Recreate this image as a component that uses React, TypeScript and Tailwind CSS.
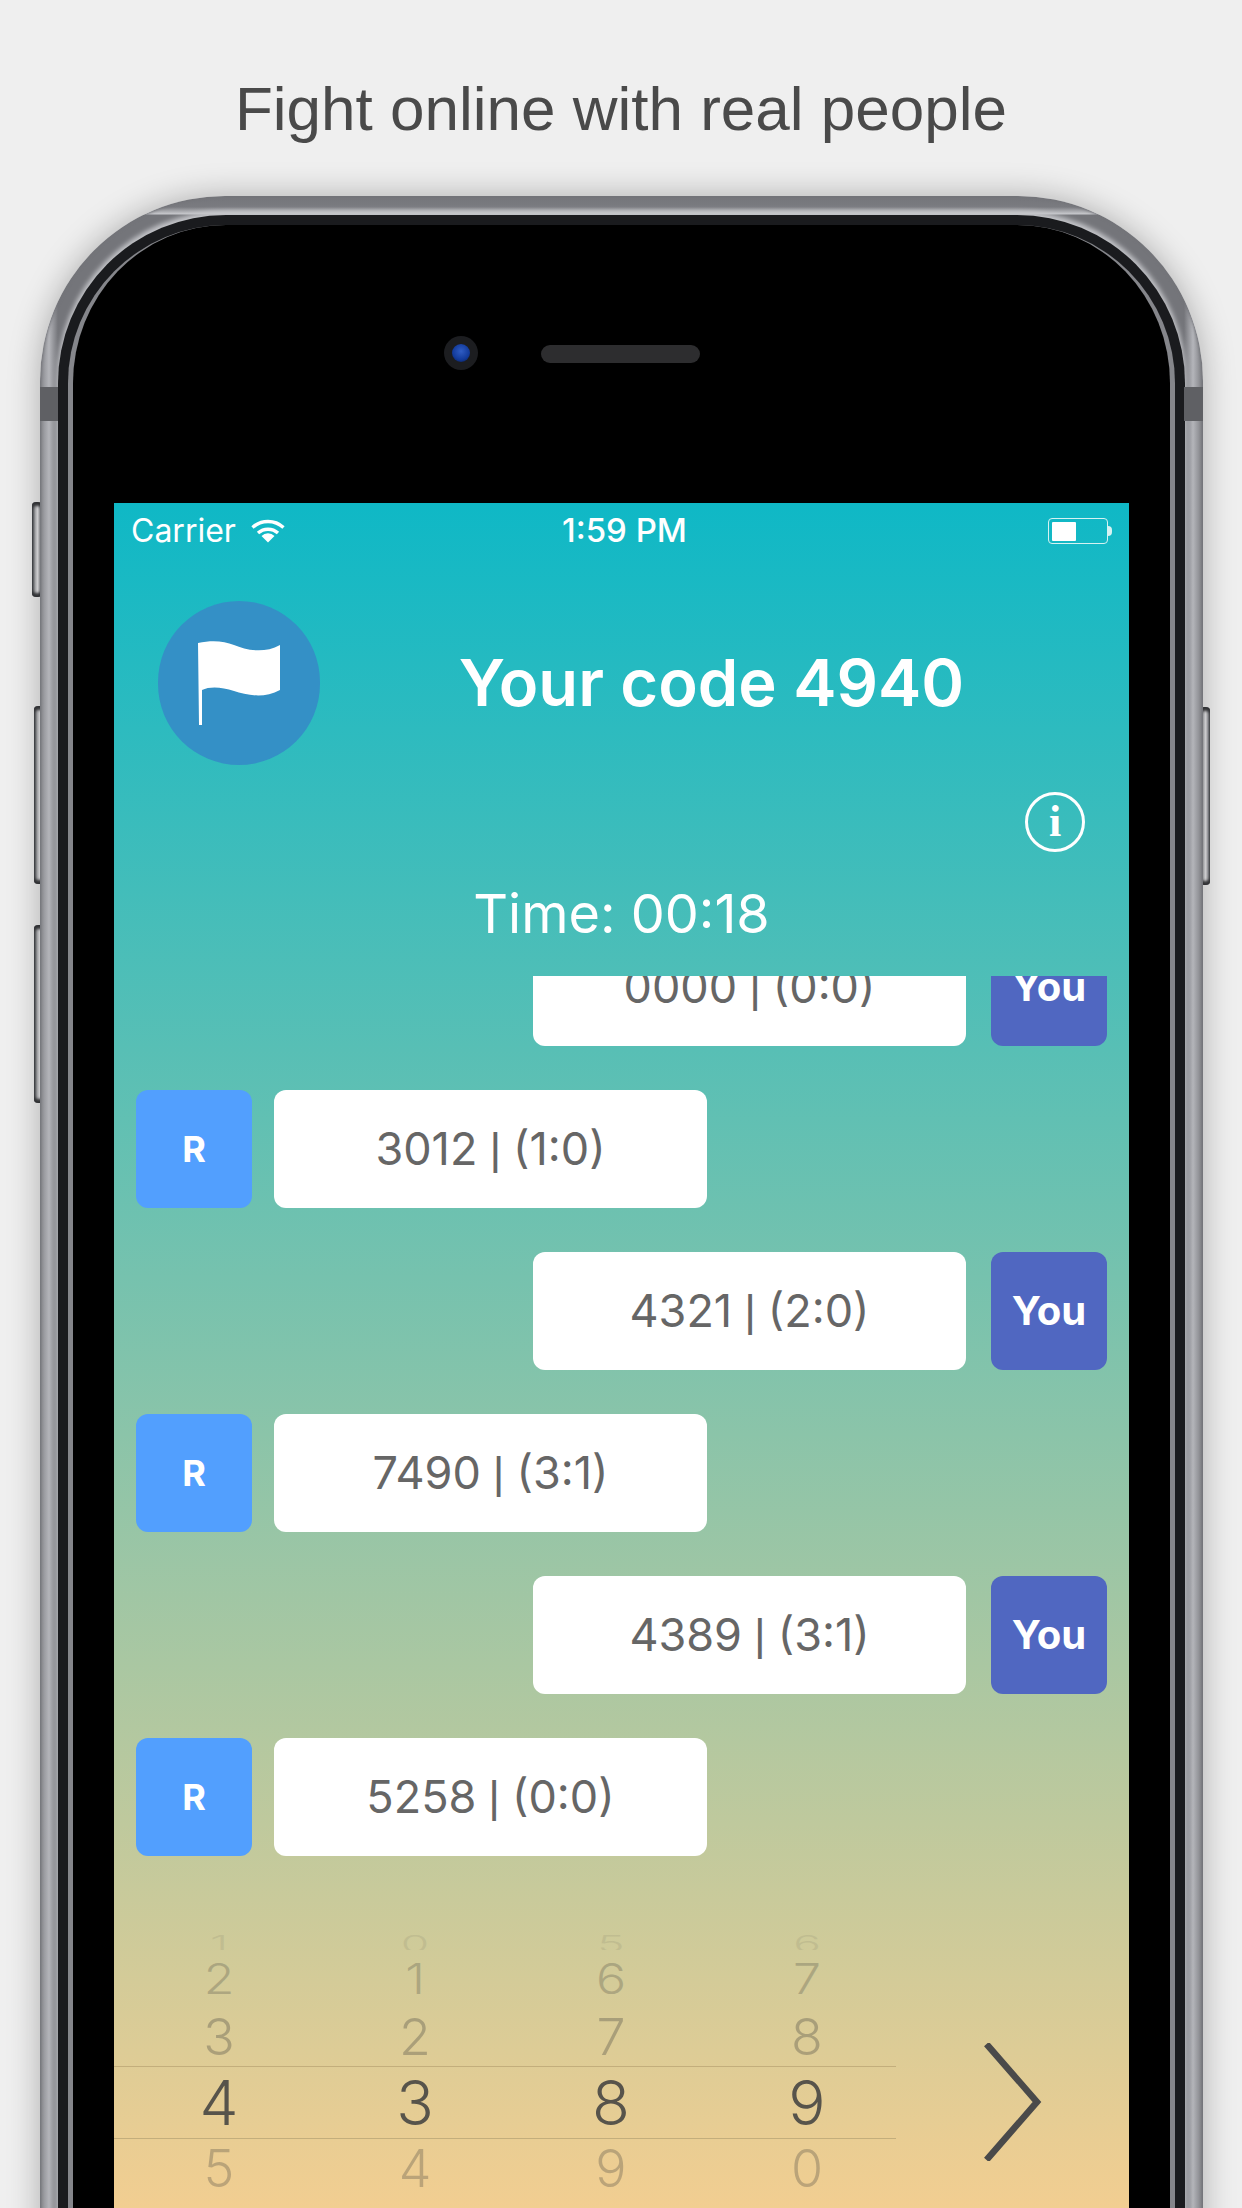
const UI = "font-['Inter','Liberation_Sans',sans-serif]";

function Wifi() {
  return (
    <svg width="34" height="24" viewBox="0 0 34 24" className="ml-[15px] shrink-0" fill="none" stroke="white" strokeWidth="3.4">
      <path d="M1.5 8.5 A23 23 0 0 1 32.5 8.5" />
      <path d="M7 14 A15 15 0 0 1 27 14" />
      <path d="M17 23.5 L10.5 17 A9 9 0 0 1 23.5 17 Z" fill="white" stroke="none" />
    </svg>
  );
}

function Flag() {
  return (
    <svg width="82" height="84" viewBox="0 0 82 84" fill="white">
      <path d="M0 2 C14 -1 26 0 36 4 C48 9 66 13 82 4 L82 49 C66 58 48 54 36 50 C24 46 12 45 4 49 L4 84 L1 84 Z" />
    </svg>
  );
}

function Chevron() {
  return (
    <svg width="60" height="118" viewBox="0 0 60 118" fill="none" stroke="#4a4a4a" strokeWidth="6.5">
      <path d="M3.5 1 L54 59 L3.5 117" />
    </svg>
  );
}

function Score({ text }: { text: string }) {
  const [code, score] = text.split(" | ");
  return (
    <>
      {code}
      <span className="mx-[12px] font-['Liberation_Sans',sans-serif]">|</span>
      {score}
    </>
  );
}

function Row({ side, text }: { side: "r" | "y"; text: string }) {
  if (side === "r") {
    return (
      <div className="flex h-[118px] pl-[22px]">
        <div className="flex h-[118px] w-[116px] items-center justify-center rounded-[12px] bg-[#529ffe] text-[36px] font-bold text-white">R</div>
        <div className="ml-[22px] flex h-[118px] w-[433px] items-center justify-center rounded-[12px] bg-white text-[45px] text-[#666666]">
          <Score text={text} />
        </div>
      </div>
    );
  }
  return (
    <div className="flex h-[118px] justify-end pr-[22px]">
      <div className="mr-[25px] flex h-[118px] w-[433px] items-center justify-center rounded-[12px] bg-white text-[45px] text-[#666666]">
        <Score text={text} />
      </div>
      <div className="flex h-[118px] w-[116px] items-center justify-center rounded-[12px] bg-[#5067c1] text-[40px] font-bold text-white">You</div>
    </div>
  );
}

function Digits({ values, className }: { values: string[]; className: string }) {
  return (
    <div className={`grid w-[782px] grid-cols-[196px_196px_196px_196px] pl-[7px] ${className}`}>
      {values.map((v, i) => (
        <div key={i} className="flex items-center justify-center">{v}</div>
      ))}
    </div>
  );
}

function SideButton({ className }: { className: string }) {
  return (
    <div className={`absolute w-[10px] rounded-[4px] bg-[linear-gradient(to_right,#55565a,#c8c9cc_40%,#e8e8ea_55%,#9a9ba0_85%,#6a6b70)] shadow-[inset_0_4px_3px_#38393c,inset_0_-4px_3px_#38393c] ${className}`} />
  );
}

export default function App() {
  return (
    <div className="h-[2208px] w-[1242px] overflow-hidden bg-[#efefef]">
      <div className="flex h-[196px] items-center justify-center pt-5 font-['Liberation_Sans',sans-serif] text-[62px] text-[#4a4a4a]">
        Fight online with real people
      </div>

      <div className="relative ml-[40px] w-[1163px]">
        <SideButton className="left-[-8px] top-[306px] h-[95px]" />
        <SideButton className="left-[-6px] top-[510px] h-[178px]" />
        <SideButton className="left-[-6px] top-[729px] h-[178px]" />
        <SideButton className="right-[-7px] top-[511px] h-[178px]" />

        <div className="relative h-[2100px] rounded-t-[185px] bg-[linear-gradient(to_bottom,#74757a_0px,#7a7b80_11px,#c8c9cd_18px,transparent_19px),linear-gradient(to_right,#84858a_0px,#b4b5ba_9px,#74757a_18px,#74757a_calc(100%-19px),#b4b5ba_calc(100%-10px),#7a7b80_100%)] pt-[19px] shadow-[0_0_32px_rgba(0,0,0,0.28),inset_0_0_3px_1px_#727378]">
          <div className="absolute left-0 top-[191px] h-[34px] w-[18px] bg-[#5f6064]" />
          <div className="absolute right-0 top-[191px] h-[34px] w-[19px] bg-[#5f6064]" />
          <div className="mx-[18px] h-full rounded-t-[168px] bg-[#1a1b1e] px-[10px] pt-[10px] shadow-[0_-3px_5px_1px_#c5c6ca]">
            <div className="h-full rounded-t-[158px] border-x-[5px] border-[#85868b] bg-black">
              <div className="relative flex h-[278px] items-start">
                <div className="absolute left-[371px] top-[111px] flex h-[34px] w-[34px] items-center justify-center rounded-full bg-[#1c1d20]">
                  <div className="h-[18px] w-[18px] rounded-full bg-[radial-gradient(circle_at_50%_40%,#2f5cc4,#123a9a_60%,#08153f)]" />
                </div>
                <div className="absolute left-[468px] top-[120px] h-[18px] w-[159px] rounded-full bg-[#2d2d2f]" />
              </div>

              <div className={`ml-[41px] flex h-[1705px] w-[1015px] flex-col bg-[linear-gradient(to_bottom,#0fb8c6,#f2ce91)] ${UI}`}>
                <div className="relative flex h-[56px] shrink-0 items-center pl-[17px] text-[32px] text-white">
                  <span>Carrier</span>
                  <Wifi />
                  <span className="absolute left-[448px] text-[33px] font-medium">1:59 PM</span>
                  <div className="absolute left-[934px] flex items-center">
                    <div className="h-[26px] w-[60px] rounded-[4px] border-[1.5px] border-[#d5f2f2] p-[2.5px]">
                      <div className="h-full w-[24px] rounded-[1px] bg-white" />
                    </div>
                    <div className="h-[10px] w-[4px] rounded-r-full bg-[#d5f2f2]" />
                  </div>
                </div>

                <div className="mt-[42px] flex h-[164px] shrink-0 items-center pl-[44px]">
                  <div className="flex h-[164px] w-[162px] items-center justify-center rounded-full bg-[#3490c6]">
                    <Flag />
                  </div>
                  <div className="flex-1 pr-[26px] text-center text-[65px] font-semibold text-white">Your code 4940</div>
                </div>

                <div className="mt-[27px] flex shrink-0 justify-end pr-[44px]">
                  <div className="flex h-[60px] w-[60px] items-center justify-center rounded-full border-[3px] border-white font-['Liberation_Serif',serif] text-[44px] font-bold leading-none text-white">i</div>
                </div>

                <div className="flex h-[124px] shrink-0 items-center justify-center pb-[2px] text-[54px] text-white">Time: 00:18</div>

                <div className="h-[950px] shrink-0 overflow-hidden">
                  <div className="mt-[-48px] flex flex-col gap-[44px]">
                    <Row side="y" text="0000 | (0:0)" />
                    <Row side="r" text="3012 | (1:0)" />
                    <Row side="y" text="4321 | (2:0)" />
                    <Row side="r" text="7490 | (3:1)" />
                    <Row side="y" text="4389 | (3:1)" />
                    <Row side="r" text="5258 | (0:0)" />
                  </div>
                </div>

                <div className="flex min-h-0 flex-1 items-start font-light leading-none">
                  <div className="flex w-[782px] flex-col">
                    <div className="h-[24px] overflow-hidden">
                      <Digits values={["1", "0", "5", "6"]} className="h-[24px] scale-y-[0.5] text-[46px] text-[#3a3a3a] opacity-[0.09]" />
                    </div>
                    <Digits values={["2", "1", "6", "7"]} className="h-[58px] scale-y-[0.85] text-[50px] text-[#3a3a3a] opacity-[0.25]" />
                    <Digits values={["3", "2", "7", "8"]} className="h-[58px] scale-y-[0.98] text-[52px] text-[#3a3a3a] opacity-[0.3]" />
                    <div className="h-[73px] border-y-[1.5px] border-[#c3ae7c]">
                      <Digits values={["4", "3", "8", "9"]} className="h-full text-[62px] text-[#3f3f3f] opacity-[0.85]" />
                    </div>
                    <Digits values={["5", "4", "9", "0"]} className="h-[60px] text-[52px] text-[#3a3a3a] opacity-[0.28]" />
                  </div>
                  <div className="ml-[87px] mt-[117px]">
                    <Chevron />
                  </div>
                </div>
              </div>
            </div>
          </div>
        </div>
      </div>
    </div>
  );
}
